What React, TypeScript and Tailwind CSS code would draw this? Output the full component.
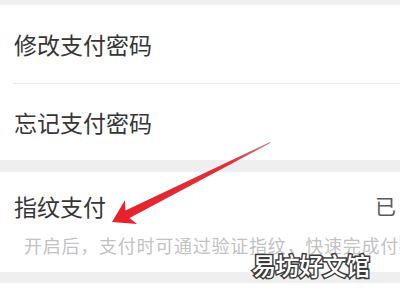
export default function App() {
  const cjk = { fontFamily: '"Noto Sans CJK SC", "Noto Sans", sans-serif' };

  return (
    <div className="relative w-[400px] h-[300px] overflow-hidden bg-[#efefef]" style={cjk}>
      <div className="mt-[5px] bg-white">
        <div className="h-[78px] flex items-center pl-[14px] text-[23px] text-[#363636]">修改支付密码</div>
        <div className="ml-[13px] h-px bg-[#ececec]" />
        <div className="h-[76px] flex items-center pl-[14px] text-[23px] text-[#363636]">忘记支付密码</div>
      </div>

      <div className="mt-[12px] bg-white h-[100px] pt-[20px]">
        <div className="flex items-center h-[28px] whitespace-nowrap">
          <span className="w-[375px] shrink-0 pl-[14px] text-[23px] text-[#363636]">指纹支付</span>
          <span className="text-[21px] tracking-[3px] text-[#5a5a5a]">已开启</span>
        </div>
        <div className="mt-[13px] h-[24px] flex items-center pl-[24px] whitespace-nowrap text-[18px] tracking-[0.75px] text-[#c2c2c2]">
          开启后，支付时可通过验证指纹，快速完成付款
        </div>
      </div>

      <div className="mt-[11px] bg-white h-[20px]" />

      {/* red arrow drawn over the screenshot */}
      <svg className="absolute inset-0" width="400" height="300" viewBox="0 0 400 300">
        <defs>
          <linearGradient id="arrowFill" x1="112" y1="222" x2="270" y2="142" gradientUnits="userSpaceOnUse">
            <stop offset="0" stopColor="#e8202a" />
            <stop offset="0.75" stopColor="#e0303a" />
            <stop offset="1" stopColor="#c88890" />
          </linearGradient>
        </defs>
        <polygon
          points="112,222 125,200 125.5,210.5 270,142 270.5,143 129.5,218 137,224"
          fill="url(#arrowFill)"
        />
      </svg>

      {/* watermark */}
      <div className="absolute left-[252px] top-[251px] text-[24px] leading-[28px] font-medium text-white [-webkit-text-stroke:3px_#3c3c3c] [paint-order:stroke_fill] tracking-[-0.5px]">
        易坊好文馆
      </div>
    </div>
  );
}
